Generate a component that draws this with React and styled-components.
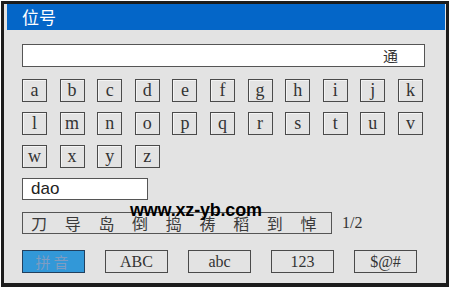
import React from 'react';
import styled, { createGlobalStyle } from 'styled-components';

const GlobalStyle = createGlobalStyle`
  html, body {
    margin: 0;
    padding: 0;
    background: #ffffff;
  }
  body {
    width: 450px;
    height: 290px;
    overflow: hidden;
  }
`;

const rows = [
  ['a', 'b', 'c', 'd', 'e', 'f', 'g', 'h', 'i', 'j', 'k'],
  ['l', 'm', 'n', 'o', 'p', 'q', 'r', 's', 't', 'u', 'v'],
  ['w', 'x', 'y', 'z'],
];

const candidates = ['刀', '导', '岛', '倒', '捣', '祷', '稻', '到', '悼'];
const modes = ['拼音', 'ABC', 'abc', '123', '$@#'];

const App = () => {
  return (
    <>
      <GlobalStyle />
      <Page>
        <Window>
          <TitleBar>位号</TitleBar>
          <Body>
            <ResultInput>通</ResultInput>
            <KeyGrid>
              {rows.flat().map((k) => (
                <Key key={k}>{k}</Key>
              ))}
            </KeyGrid>
            <SpellInput>dao</SpellInput>
            <CandidateRow>
              <CandidateBox>
                {candidates.map((c) => (
                  <Candidate key={c}>{c}</Candidate>
                ))}
              </CandidateBox>
              <PageInfo>1/2</PageInfo>
            </CandidateRow>
            <ModeRow>
              {modes.map((m, i) => (
                <ModeButton key={m} active={i === 0}>
                  {m}
                </ModeButton>
              ))}
            </ModeRow>
          </Body>
        </Window>
        <Watermark>www.xz-yb.com</Watermark>
      </Page>
    </>
  );
};

export default App;

const Page = styled.div`
  position: relative;
  padding: 1px 1px 0 1px;
`;

const Window = styled.div`
  width: 442px;
  border: 3px solid #1c1c1c;
  border-bottom-width: 4px;
  background: #e3e3e3;
  display: flex;
  flex-direction: column;
`;

const TitleBar = styled.div`
  height: 26px;
  margin: 0 1px 0 3px;
  background: #0466c8;
  color: #ffffff;
  font-family: 'Noto Sans CJK SC', sans-serif;
  font-size: 17px;
  line-height: 25px;
  padding-left: 15px;
`;

const Body = styled.div`
  display: flex;
  flex-direction: column;
  align-items: flex-start;
  padding: 14px 0 10px 18px;
`;

const ResultInput = styled.div`
  box-sizing: border-box;
  width: 403px;
  height: 23px;
  background: #ffffff;
  border: 1px solid #555555;
  display: flex;
  align-items: center;
  justify-content: flex-end;
  padding-right: 26px;
  font-family: 'Noto Sans CJK SC', serif;
  font-size: 15px;
  color: #333333;
`;

const KeyGrid = styled.div`
  display: grid;
  grid-template-columns: repeat(11, 25px);
  grid-auto-rows: 23px;
  column-gap: 12.6px;
  row-gap: 10px;
  margin-top: 12px;
`;

const Key = styled.div`
  box-sizing: border-box;
  border: 1px solid #4a4a4a;
  box-shadow: inset 1px 1px 0 #f4f4f4;
  display: flex;
  align-items: center;
  justify-content: center;
  font-family: 'Liberation Serif', serif;
  font-size: 18px;
  color: #333333;
  padding-bottom: 1px;
`;

const SpellInput = styled.div`
  box-sizing: border-box;
  width: 126px;
  height: 22px;
  margin-top: 10px;
  background: #ffffff;
  border: 1px solid #555555;
  padding-left: 8px;
  font-family: 'Liberation Sans', sans-serif;
  font-size: 17px;
  line-height: 20px;
  color: #222222;
`;

const CandidateRow = styled.div`
  display: flex;
  align-items: center;
  gap: 10px;
  margin-top: 12px;
`;

const CandidateBox = styled.div`
  box-sizing: border-box;
  width: 310px;
  height: 22px;
  border: 1px solid #555555;
  display: flex;
  align-items: center;
  gap: 17.7px;
  padding-left: 8px;
`;

const Candidate = styled.span`
  font-family: 'Noto Sans CJK SC', serif;
  font-size: 16px;
  line-height: 16px;
  width: 16px;
  color: #3a3a3a;
`;

const PageInfo = styled.span`
  font-family: 'Liberation Serif', serif;
  font-size: 16px;
  color: #333333;
`;

const ModeRow = styled.div`
  display: flex;
  gap: 20px;
  margin-top: 16px;
`;

const ModeButton = styled.div`
  box-sizing: border-box;
  width: 63px;
  height: 23px;
  border: 1px solid ${({ active }) => (active ? '#22405e' : '#4a4a4a')};
  background: ${({ active }) => (active ? '#3298d8' : 'transparent')};
  color: ${({ active }) => (active ? '#7d9cc2' : '#333333')};
  display: flex;
  align-items: center;
  justify-content: center;
  font-family: ${({ active }) =>
    active ? "'Noto Sans CJK SC', serif" : "'Liberation Serif', serif"};
  font-size: ${({ active }) => (active ? '15px' : '16px')};
  letter-spacing: ${({ active }) => (active ? '3px' : '0')};
`;

const Watermark = styled.div`
  position: absolute;
  left: 130px;
  top: 200px;
  font-family: 'Liberation Sans', sans-serif;
  font-weight: bold;
  font-size: 18px;
  color: #000000;
  letter-spacing: -0.2px;
`;
